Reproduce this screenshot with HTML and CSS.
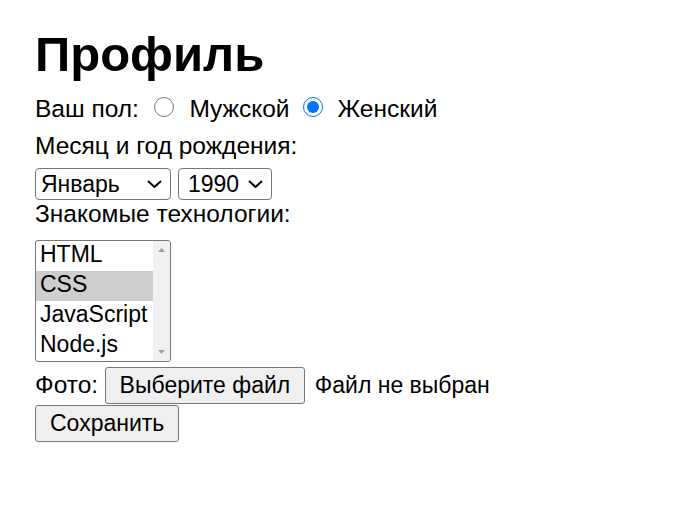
FILE: index.html
```html
<!DOCTYPE html>
<html lang="ru">
<head>
<meta charset="utf-8">
<title>Профиль</title>
<link rel="stylesheet" href="styles.css">
</head>
<body>
<main class="page">
  <h1 class="title">Профиль</h1>
  <form class="profile">
    <div class="row gender">Ваш пол:<label class="choice"><input class="radio radio-male" type="radio" name="gender" value="m">Мужской</label><label class="choice"><input class="radio radio-female" type="radio" name="gender" value="f" checked>Женский</label></div>
    <div class="row label-row">Месяц и год рождения:</div>
    <div class="row selects">
      <select class="dropdown month" name="month">
        <option selected>Январь</option>
        <option>Февраль</option>
        <option>Март</option>
        <option>Апрель</option>
        <option>Май</option>
        <option>Июнь</option>
        <option>Июль</option>
        <option>Август</option>
        <option>Сентябрь</option>
        <option>Октябрь</option>
        <option>Ноябрь</option>
        <option>Декабрь</option>
      </select>
      <select class="dropdown year" name="year">
        <option selected>1990</option>
        <option>1991</option>
        <option>1992</option>
      </select>
    </div>
    <div class="row tech-label">Знакомые технологии:</div>
    <div class="listbox" role="listbox" aria-multiselectable="true">
      <div class="listbox-options">
        <div class="listbox-option" role="option">HTML</div>
        <div class="listbox-option selected" role="option" aria-selected="true">CSS</div>
        <div class="listbox-option" role="option">JavaScript</div>
        <div class="listbox-option" role="option">Node.js</div>
      </div>
      <div class="listbox-scrollbar">
        <svg class="scroll-arrow" width="7" height="4" viewBox="0 0 7 4"><path d="M0 4 L3.5 0 L7 4 Z" fill="#a3a3a3"/></svg>
        <svg class="scroll-arrow" width="7" height="4" viewBox="0 0 7 4"><path d="M0 0 L3.5 4 L7 0 Z" fill="#a3a3a3"/></svg>
      </div>
    </div>
    <div class="row file-row"><span class="file-label">Фото:</span><button type="button" class="btn file-btn">Выберите файл</button><span class="file-status">Файл не выбран</span></div>
    <div class="row save-row"><button type="submit" class="btn">Сохранить</button></div>
  </form>
</main>
</body>
</html>
```
FILE: styles.css
```css
html, body {
  margin: 0;
  background: #ffffff;
}

body {
  font-family: "Liberation Sans", Arial, sans-serif;
  font-size: 24.5px;
  line-height: normal;
  color: #000000;
}

.page {
  padding: 25.75px 35px;
}

.title {
  font-size: 49px;
  font-weight: bold;
  line-height: normal;
  margin: 0 0 13.65px;
}

.row {
  line-height: normal;
}

.radio {
  width: 20px;
  height: 20px;
  margin: 0 15px 0 15.5px;
  vertical-align: baseline;
  accent-color: #0075ff;
}

.radio-female {
  margin-left: 13px;
}

.label-row {
  margin-top: 8.5px;
}

.selects {
  display: flex;
  gap: 7px;
  margin-top: 8px;
}

.dropdown {
  appearance: none;
  -webkit-appearance: none;
  box-sizing: border-box;
  height: 32px;
  font-family: inherit;
  font-size: 23px;
  color: #000000;
  background-color: #ffffff;
  background-image: url("data:image/svg+xml;utf8,<svg xmlns='http://www.w3.org/2000/svg' width='15' height='8' viewBox='0 0 15 8'><path d='M1 1 L7.5 7 L14 1' fill='none' stroke='black' stroke-width='2'/></svg>");
  background-repeat: no-repeat;
  background-position: right 8px center;
  background-size: 15px 8px;
  border: 1px solid #767676;
  border-radius: 4px;
  padding: 0 28px 0 5px;
}

.month {
  width: 136px;
}

.year {
  width: 94px;
  padding-left: 9px;
}

.tech-label {
  margin-top: 0;
}

.listbox {
  display: flex;
  box-sizing: border-box;
  width: 136px;
  margin-top: 11.75px;
  border: 1px solid #767676;
  border-radius: 3px;
  overflow: hidden;
  background: #ffffff;
  font-size: 23px;
}

.listbox-options {
  flex: 1;
}

.listbox-option {
  line-height: 26.4px;
  padding: 0 3px 3.6px 4px;
  white-space: nowrap;
}

.listbox-option.selected {
  background: #cecece;
}

.listbox-scrollbar {
  width: 17px;
  flex: none;
  background: #f1f1f1;
  display: flex;
  flex-direction: column;
  justify-content: space-between;
  align-items: center;
  padding: 7px 0;
}

.scroll-arrow {
  display: block;
}

.file-row {
  display: flex;
  align-items: baseline;
  margin-top: 5.5px;
}

.file-status {
  font-size: 23px;
}

.btn {
  font-family: inherit;
  font-size: 23px;
  line-height: normal;
  color: #000000;
  background: #efefef;
  border: 1px solid #767676;
  border-radius: 3px;
  padding: 4px 14px;
}

.file-btn {
  margin: 0 9.5px 0 6.5px;
}

.save-row {
  margin-top: 0.8px;
}
```
